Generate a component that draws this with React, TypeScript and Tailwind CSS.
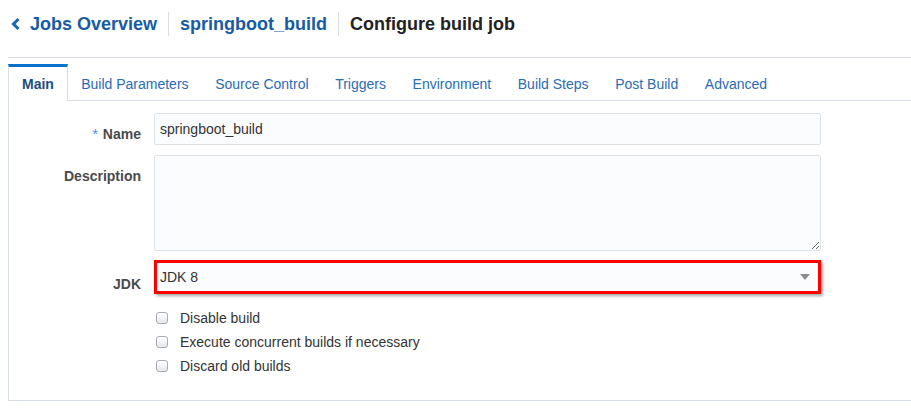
import React from 'react';

const tabs = ['Build Parameters', 'Source Control', 'Triggers', 'Environment', 'Build Steps', 'Post Build', 'Advanced'];
const options = ['Disable build', 'Execute concurrent builds if necessary', 'Discard old builds'];

const Checkbox: React.FC<{ label: string }> = ({ label }) => (
  <div className="flex items-center h-[24px] gap-[12px]">
    <div className="w-[12px] h-[12px] rounded-[3px] border border-[#a8adb3] bg-gradient-to-b from-white to-[#e4e7ea]" />
    <span className="text-[14px] text-[#333]">{label}</span>
  </div>
);

export default function App() {
  return (
    <div className="w-[911px] h-[417px] bg-white overflow-hidden font-['Liberation_Sans',Arial,sans-serif]">
      {/* breadcrumb header */}
      <div className="pt-[12px] pl-[11px] h-[36px] flex items-center text-[18px] font-bold leading-[24px]">
        <svg width="10" height="14" viewBox="0 0 10 14" className="mr-[9px]">
          <path d="M7.5 2 L2.5 7 L7.5 12" fill="none" stroke="#1565b8" strokeWidth="3" />
        </svg>
        <span className="text-[#165ba5]">Jobs Overview</span>
        <div className="w-px h-[24px] bg-[#d9dee3] mx-[11px]" />
        <span className="text-[#165ba5]">springboot_build</span>
        <div className="w-px h-[24px] bg-[#d9dee3] mx-[11px]" />
        <span className="text-[#222]">Configure build job</span>
      </div>

      <div className="ml-[8px] mt-[21px] border-t border-[#d9dfe5]">
        {/* tabs */}
        <div className="mt-[6px] flex h-[37px] border-b border-[#d6dde4] text-[14px]">
          <div className="relative h-[37px] bg-white border-t-[3px] border-x border-t-[#0572ce] border-x-[#d6dde4] px-[13px] flex items-center font-bold text-[#1f4c80]">
            Main
          </div>
          {tabs.map((t) => (
            <div key={t} className="px-[13.3px] pt-[4px] flex items-center text-[#2a6cb6]">
              {t}
            </div>
          ))}
        </div>

        {/* panel */}
        <div className="h-[300px] border-l border-b border-[#d6dde4] pt-[12px] text-[14px]">
          <div className="flex gap-[13px]">
            <div className="w-[132px] text-right pt-[13px] leading-[16px] font-bold text-[#4a4a4a]">
              <span className="text-[#4f8ad8] font-normal mr-[5px]">*</span>Name
            </div>
            <div className="w-[667px] h-[32px] border border-[#dde2e7] rounded-[2px] bg-[#fbfcfd] pl-[5px] flex items-center text-[#333]">
              springboot_build
            </div>
          </div>

          <div className="flex gap-[13px] mt-[10px]">
            <div className="w-[132px] text-right pt-[13px] leading-[16px] font-bold text-[#4a4a4a]">Description</div>
            <textarea
              readOnly
              className="w-[667px] h-[96px] border border-[#dde2e7] rounded-[2px] bg-[#fbfcfd] outline-none"
            />
          </div>

          <div className="flex gap-[13px] mt-[9px]">
            <div className="w-[132px] text-right pt-[16px] leading-[16px] font-bold text-[#4a4a4a]">JDK</div>
            <div className="w-[667px] h-[34px] border-[3px] border-[#f00] bg-[#fbfcfd] pl-[3px] pr-[8px] flex items-center justify-between text-[#333] shadow-[2px_2px_3px_rgba(0,0,0,0.35)]">
              <span>JDK 8</span>
              <svg width="10" height="7" viewBox="0 0 10 7">
                <path d="M0 0 H10 L5 6 Z" fill="#8a8f94" />
              </svg>
            </div>
          </div>

          <div className="mt-[12px] ml-[147px] flex flex-col">
            {options.map((o) => (
              <Checkbox key={o} label={o} />
            ))}
          </div>
        </div>
      </div>
    </div>
  );
}
